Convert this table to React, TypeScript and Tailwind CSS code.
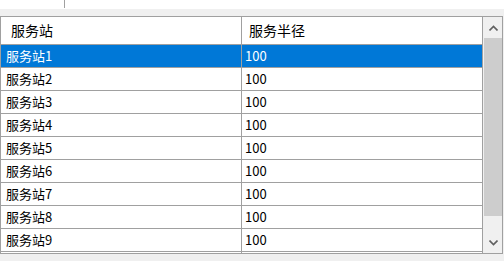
const rows = Array.from({ length: 9 }, (_, i) => ({
  name: `服务站${i + 1}`,
  radius: "100",
}));

const font = "font-['Noto_Sans_CJK_SC','Liberation_Sans',sans-serif]";

function Chevron({ up }: { up?: boolean }) {
  return (
    <svg width="9" height="6" viewBox="0 0 9 6" className="block">
      <path
        d={up ? "M0.5 5.5 L4.5 1.5 L8.5 5.5" : "M0.5 0.5 L4.5 4.5 L8.5 0.5"}
        fill="none"
        stroke="#606060"
        strokeWidth="1.6"
      />
    </svg>
  );
}

export default function App() {
  return (
    <div className={`w-[504px] h-[261px] overflow-hidden bg-[#f0f0f0] ${font}`}>
      {/* toolbar strip above the grid */}
      <div className="h-[9px] bg-white">
        <div className="w-[65px] h-[8px] border-r border-[#a0a0a0]" />
      </div>
      <div className="h-[7px]" />

      <div className="w-[503px] h-[238px] border border-[#a0a0a0] bg-white flex">
        <div className="w-[482px] overflow-hidden flex flex-col">
          {/* header */}
          <div className="flex h-[28px] shrink-0 border-b border-[#a0a0a0] text-[14px] text-black">
            <div className="w-[241px] border-r border-[#a0a0a0] flex items-center pl-[10px]">服务站</div>
            <div className="w-[241px] border-r border-[#a0a0a0] flex items-center pl-[7px]">服务半径</div>
          </div>
          {rows.map((r, i) => (
            <div
              key={r.name}
              className={`flex h-[23px] shrink-0 border-b border-[#a0a0a0] text-[13px] ${
                i === 0 ? "bg-[#0078d7] text-white" : "text-black"
              }`}
            >
              <div className="w-[241px] border-r border-[#a0a0a0] flex items-center pl-[5px]">{r.name}</div>
              <div className="w-[241px] border-r border-[#a0a0a0] flex items-center pl-[3px]">{r.radius}</div>
            </div>
          ))}
          {/* next row, scrolled out of view */}
          <div className="flex flex-1">
            <div className="w-[241px] border-r border-[#a0a0a0]" />
            <div className="w-[241px] border-r border-[#a0a0a0]" />
          </div>
        </div>

        {/* vertical scrollbar */}
        <div className="w-[19px] bg-[#f0f0f0] flex flex-col">
          <div className="h-[21px] flex items-center justify-center pl-[1px]">
            <Chevron up />
          </div>
          <div className="h-[178px] ml-[1px] bg-[#cdcdcd]" />
          <div className="flex-1" />
          <div className="h-[20px] flex items-center justify-center pl-[1px] pb-[1px]">
            <Chevron />
          </div>
        </div>
      </div>
    </div>
  );
}
